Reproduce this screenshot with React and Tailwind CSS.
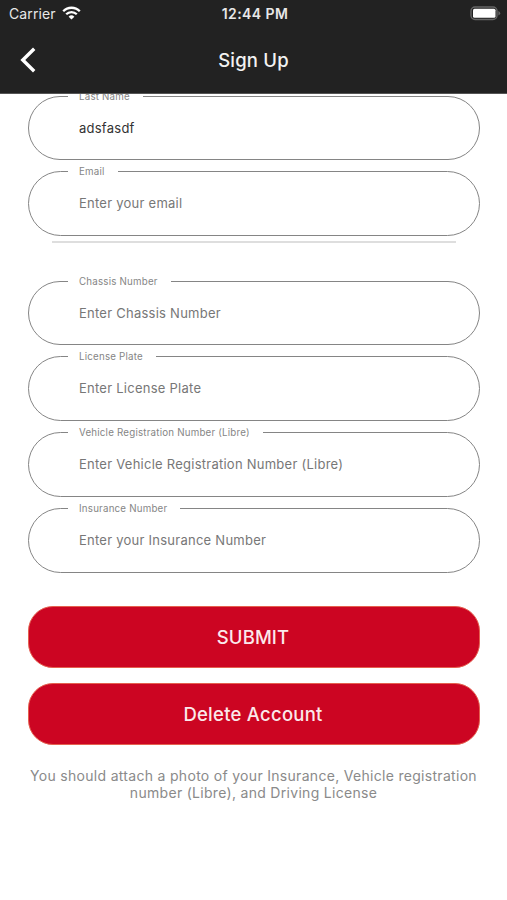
import { useState } from "react";

function StatusBar() {
    return (
        <div className="flex h-[28px] items-center justify-between pl-[9px] pr-[6px] text-[#e8e8e8]">
            <div className="flex flex-1 items-center gap-[6px]">
                <span className="text-[14px] leading-none tracking-[0.1px]">Carrier</span>
                <svg className="-mt-[2px]" width="19" height="14" viewBox="0 0 19 14" fill="none" stroke="#fff" strokeWidth="2.3">
                    <path d="M1.2 5.2A11.7 11.7 0 0 1 17.8 5.2" />
                    <path d="M4.2 8.3A7.5 7.5 0 0 1 14.8 8.3" />
                    <path d="M9.5 13.6L6.6 10.7A4.1 4.1 0 0 1 12.4 10.7Z" fill="#fff" stroke="none" />
                </svg>
            </div>
            <span className="text-[14px] font-semibold leading-none tracking-[0.4px]">12:44 PM</span>
            <div className="flex flex-1 justify-end">
                <svg className="-mt-px" width="31" height="15" viewBox="0 0 31 15">
                    <rect x="1" y="1" width="26" height="12.5" rx="4" fill="none" stroke="#666" strokeWidth="1.4" />
                    <rect x="3" y="2.8" width="22.5" height="9" rx="1.5" fill="#fff" />
                    <path d="M28.4 5V9.6Q30.2 8.8 30.2 7.3T28.4 5Z" fill="#666" />
                </svg>
            </div>
        </div>
    );
}

function Field({ label, name, placeholder, value, onChange }) {
    return (
        <fieldset className="h-[64.75px] rounded-full border border-[#858585] pl-[39px] pr-10">
            <legend className="h-px whitespace-nowrap pl-[11px] pr-[13px] text-[9.75px] leading-[1px] tracking-[0.2px] text-[#858585]">{label}</legend>
            <input type="text" name={name} aria-label={label} className="block h-[62px] w-full bg-transparent pl-[11px] text-[13px] tracking-[0.25px] text-[#333] outline-none placeholder:text-[#777]" placeholder={placeholder} value={value} onChange={onChange} />
        </fieldset>
    );
}

export default function App() {
    const [formData, setFormData] = useState({
        lastName: "adsfasdf",
        email: "",
        chassis: "",
        plate: "",
        libre: "",
        insurance: "",
    });

    const handleChange = (e) => {
        const { name, value } = e.target;
        setFormData((prev) => ({ ...prev, [name]: value }));
    };

    const handleSubmit = (e) => {
        e.preventDefault();
    };

    return (
        <div className="flex h-[900px] w-[507px] flex-col overflow-hidden bg-white font-['Inter','Liberation_Sans',sans-serif]">
            <header className="h-[94px] shrink-0 border-b border-[#555] bg-[#222]">
                <StatusBar />
                <div className="grid h-[65px] grid-cols-[1fr_auto_1fr] items-center">
                    <button type="button" aria-label="Back" className="ml-[20px] w-4 pb-[2px]">
                        <svg width="16" height="26" viewBox="0 0 16 26" fill="none" stroke="#fff" strokeWidth="3.4">
                            <path d="M14.2 1.8L2.8 13L14.2 24.2" />
                        </svg>
                    </button>
                    <h1 className="pt-px text-[18.5px] font-medium tracking-[0.2px] text-[#f2f2f2]">Sign Up</h1>
                </div>
            </header>

            <main className="min-h-0 flex-1 overflow-hidden">
                <form onSubmit={handleSubmit} className="pl-[28px] pr-[27px] pt-[1.6px]">
                    <div className="flex flex-col gap-[11px]">
                        <Field label="Last Name" name="lastName" value={formData.lastName} onChange={handleChange} />
                        <Field label="Email" name="email" placeholder="Enter your email" value={formData.email} onChange={handleChange} />
                    </div>

                    <hr className="mx-[24px] mt-[4.9px] h-[2px] border-0 bg-[#dedede]" />

                    <div className="mt-[37.6px] flex flex-col gap-[11px]">
                        <Field label="Chassis Number" name="chassis" placeholder="Enter Chassis Number" value={formData.chassis} onChange={handleChange} />
                        <Field label="License Plate" name="plate" placeholder="Enter License Plate" value={formData.plate} onChange={handleChange} />
                        <Field label="Vehicle Registration Number (Libre)" name="libre" placeholder="Enter Vehicle Registration Number (Libre)" value={formData.libre} onChange={handleChange} />
                        <Field label="Insurance Number" name="insurance" placeholder="Enter your Insurance Number" value={formData.insurance} onChange={handleChange} />
                    </div>

                    <div className="mt-[33.4px] flex flex-col gap-[15px]">
                        <button type="submit" className="h-[62px] rounded-[25px] border border-[#e5604f] bg-[#cc0522] pr-[2px] pt-[2px] text-[18.5px] font-medium tracking-[0.1px] text-[#fbe9eb]">SUBMIT</button>
                        <button type="button" className="h-[62px] rounded-[25px] border border-[#e5604f] bg-[#cc0522] pr-[2px] pt-[2px] text-[18.5px] font-medium tracking-[0.25px] text-[#fbe9eb]">Delete Account</button>
                    </div>
                </form>

                <p className="mx-[24px] mt-[22px] text-center text-[14px] leading-[17px] tracking-[0.3px] text-[#8a8a8a]">
                    You should attach a photo of your Insurance, Vehicle registration<br />number (Libre), and Driving License
                </p>
            </main>
        </div>
    );
}
